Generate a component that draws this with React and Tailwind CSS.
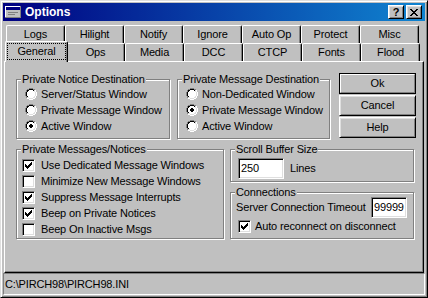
import React from "react";

const RADIO = [
  "    gggg    ",
  "  ggkkkkgg  ",
  " gkkwwwwklw ",
  " gkwwwwwwlw ",
  "gkwwwwwwwwlw",
  "gkwwwwwwwwlw",
  "gkwwwwwwwwlw",
  "gkwwwwwwwwlw",
  " gkwwwwwwlw ",
  " gllwwwwllw ",
  "  wwllllww  ",
  "    wwww    ",
];
const DOT = [
  "            ",
  "            ",
  "            ",
  "            ",
  "     kk     ",
  "    kkkk    ",
  "    kkkk    ",
  "     kk     ",
];
const CHECK = [
  "      k",
  "     kk",
  "k   kkk",
  "kk kkk ",
  "kkkkk  ",
  " kkk   ",
  "  k    ",
];
const CLOSE = [
  "kk    kk",
  " kk  kk ",
  "  kkkk  ",
  "   kk   ",
  "  kkkk  ",
  " kk  kk ",
  "kk    kk",
];
const COLORS = { g: "#808080", k: "#000000", w: "#ffffff", l: "#dfdfdf" };

function Pixels({ rows }) {
  const rects = [];
  rows.forEach((row, y) => {
    [...row].forEach((c, x) => {
      if (c !== " ")
        rects.push(
          <rect key={`${x}-${y}`} x={x} y={y} width="1" height="1" fill={COLORS[c]} />
        );
    });
  });
  return <>{rects}</>;
}

function Radio({ checked }) {
  return (
    <svg width="12" height="12" viewBox="0 0 12 12" shapeRendering="crispEdges" className="shrink-0">
      <Pixels rows={RADIO} />
      {checked && <Pixels rows={DOT} />}
    </svg>
  );
}

function Checkbox({ checked }) {
  return (
    <div className="w-[13px] h-[13px] shrink-0 bg-white border border-t-[#808080] border-l-[#808080] border-r-white border-b-white shadow-[inset_1px_1px_0_#000,inset_-1px_-1px_0_#dfdfdf] flex items-center justify-center">
      {checked && (
        <svg width="7" height="7" viewBox="0 0 7 7" shapeRendering="crispEdges">
          <Pixels rows={CHECK} />
        </svg>
      )}
    </div>
  );
}

function RadioRow({ checked, label }) {
  return (
    <div className="h-[16px] flex items-center gap-[4px]">
      <Radio checked={checked} />
      <span className="whitespace-nowrap">{label}</span>
    </div>
  );
}

function CheckRow({ checked, label, className = "" }) {
  return (
    <div className={`h-[16px] flex items-center gap-[6px] ${className}`}>
      <Checkbox checked={checked} />
      <span className="whitespace-nowrap">{label}</span>
    </div>
  );
}

function Group({ title, className = "", boxClass = "", children }) {
  return (
    <div className={`relative pt-[6px] ${className}`}>
      <span className="absolute left-[5px] top-0 px-[1px] leading-[13px] bg-[#c0c0c0] whitespace-nowrap">
        {title}
      </span>
      <div className={`border border-[#808080] shadow-[inset_1px_1px_0_#fff,1px_1px_0_#fff] ${boxClass}`}>
        {children}
      </div>
    </div>
  );
}

function Tab({ label }) {
  return (
    <div className="w-[59px] h-[18px] shrink-0 border-l border-t border-r border-l-white border-t-white border-r-black rounded-t-[2px] shadow-[inset_-1px_0_0_#808080] flex items-center justify-center whitespace-nowrap">
      {label}
    </div>
  );
}

function SelectedTab({ label }) {
  return (
    <div className="relative z-10 w-[63px] h-[21px] -mx-[2px] -mt-[2px] shrink-0 bg-[#c0c0c0] border-l border-t border-r border-l-white border-t-white border-r-black rounded-t-[2px] shadow-[inset_-1px_0_0_#808080] pt-[1px] px-[1px] pb-[2px] flex">
      <div className="flex-1 border border-dotted border-black flex items-center justify-center whitespace-nowrap">
        {label}
      </div>
    </div>
  );
}

function Button({ children, def }) {
  if (def)
    return (
      <div className="h-[21px] border border-black flex">
        <div className="flex-1 flex items-center justify-center border border-t-white border-l-white border-r-[#808080] border-b-[#808080]">
          {children}
        </div>
      </div>
    );
  return (
    <div className="h-[21px] flex items-center justify-center border border-t-white border-l-white border-r-black border-b-black shadow-[inset_1px_1px_0_#dfdfdf,inset_-1px_-1px_0_#808080]">
      {children}
    </div>
  );
}

function Field({ value, className = "" }) {
  return (
    <div className={`h-[21px] shrink-0 bg-white border border-t-[#808080] border-l-[#808080] border-r-white border-b-white shadow-[inset_1px_1px_0_#000,inset_-1px_-1px_0_#dfdfdf] pl-[2px] flex items-center overflow-hidden ${className}`}>
      {value}
    </div>
  );
}

function TitleBtn({ children }) {
  return (
    <div className="w-[16px] h-[14px] bg-[#c0c0c0] border border-t-white border-l-white border-r-black border-b-black shadow-[inset_1px_1px_0_#dfdfdf,inset_-1px_-1px_0_#808080] flex items-center justify-center">
      {children}
    </div>
  );
}

function AppIcon() {
  return (
    <svg width="16" height="12" viewBox="0 0 16 12" shapeRendering="crispEdges" className="shrink-0">
      <rect x="0" y="0" width="16" height="12" fill="#808080" />
      <rect x="0" y="0" width="15" height="11" fill="#ffffff" />
      <rect x="1" y="1" width="14" height="10" fill="#c0c0c0" />
      <rect x="1" y="1" width="14" height="3" fill="#000080" />
      <rect x="3" y="6" width="10" height="1" fill="#808080" />
      <rect x="3" y="8" width="7" height="1" fill="#808080" />
    </svg>
  );
}

export default function App() {
  return (
    <div className="w-[428px] h-[298px] bg-[#c0c0c0] font-['Liberation_Sans',Arial,sans-serif] text-[11px] tracking-[-0.15px] leading-[13px] text-black border border-t-[#dfdfdf] border-l-[#dfdfdf] border-r-black border-b-black shadow-[inset_1px_1px_0_#fff,inset_-1px_-1px_0_#808080] p-[2px] flex flex-col">
      {/* Title bar */}
      <div className="h-[18px] shrink-0 flex items-center bg-[linear-gradient(to_right,#000080,#1084d0)] pl-[2px] pr-[3px]">
        <AppIcon />
        <span className="ml-[4px] text-white font-bold text-[12px] tracking-normal">Options</span>
        <div className="ml-auto flex gap-[2px]">
          <TitleBtn>
            <span className="font-bold text-[11px] leading-none tracking-normal">?</span>
          </TitleBtn>
          <TitleBtn>
            <svg width="8" height="7" viewBox="0 0 8 7" shapeRendering="crispEdges">
              <Pixels rows={CLOSE} />
            </svg>
          </TitleBtn>
        </div>
      </div>

      {/* Tabs */}
      <div className="mt-[4px] shrink-0">
        <div className="flex items-start ml-[3px] h-[18px]">
          {["Logs", "Hilight", "Notify", "Ignore", "Auto Op", "Protect", "Misc"].map((t) => (
            <Tab key={t} label={t} />
          ))}
        </div>
        <div className="flex items-start ml-[4px] h-[18px]">
          <SelectedTab label="General" />
          {["Ops", "Media", "DCC", "CTCP", "Fonts", "Flood"].map((t) => (
            <Tab key={t} label={t} />
          ))}
        </div>
      </div>

      {/* Panel */}
      <div className="mx-[1px] h-[212px] shrink-0 border border-t-white border-l-white border-r-black border-b-black shadow-[inset_-1px_-1px_0_#808080] pt-[11px] pl-[11px]">
        <div className="flex items-start">
          <Group title="Private Notice Destination" className="w-[154px]" boxClass="h-[60px] pt-[6px] pl-[8px]">
            <RadioRow label="Server/Status Window" />
            <RadioRow label="Private Message Window" />
            <RadioRow checked label="Active Window" />
          </Group>
          <Group title="Private Message Destination" className="w-[153px] ml-[7px]" boxClass="h-[60px] pt-[6px] pl-[8px]">
            <RadioRow label="Non-Dedicated Window" />
            <RadioRow checked label="Private Message Window" />
            <RadioRow label="Active Window" />
          </Group>
          <div className="w-[77px] ml-[9px] flex flex-col gap-[1px]">
            <Button def>Ok</Button>
            <Button>Cancel</Button>
            <Button>Help</Button>
          </div>
        </div>

        <div className="flex items-start mt-[4px]">
          <Group title="Private Messages/Notices" className="w-[208px]" boxClass="h-[90px] pt-[7px] pl-[5px]">
            <CheckRow checked label="Use Dedicated Message Windows" />
            <CheckRow label="Minimize New Message Windows" />
            <CheckRow checked label="Suppress Message Interrupts" />
            <CheckRow checked label="Beep on Private Notices" />
            <CheckRow label="Beep On Inactive Msgs" />
          </Group>
          <div className="w-[184px] ml-[6px] flex flex-col">
            <Group title="Scroll Buffer Size" boxClass="h-[33px] pt-[8px] pl-[7px]">
              <div className="flex items-center">
                <Field value="250" className="w-[46px]" />
                <span className="ml-[6px]">Lines</span>
              </div>
            </Group>
            <Group title="Connections" className="mt-[4px]" boxClass="h-[47px] pt-[4px] pl-[5px] pr-[6px]">
              <div className="flex items-center">
                <span className="whitespace-nowrap">Server Connection Timeout</span>
                <Field value="99999" className="w-[36px] ml-auto" />
              </div>
              <div className="h-[16px] flex items-center gap-[4px] ml-[2px]">
                <Checkbox checked />
                <span className="whitespace-nowrap">Auto reconnect on disconnect</span>
              </div>
            </Group>
          </div>
        </div>
      </div>

      {/* Status bar */}
      <div className="h-[22px] shrink-0 border border-t-[#808080] border-l-[#808080] border-r-white border-b-white flex items-center pl-[1px]">
        {"C:\\PIRCH98\\PIRCH98.INI"}
      </div>
    </div>
  );
}
